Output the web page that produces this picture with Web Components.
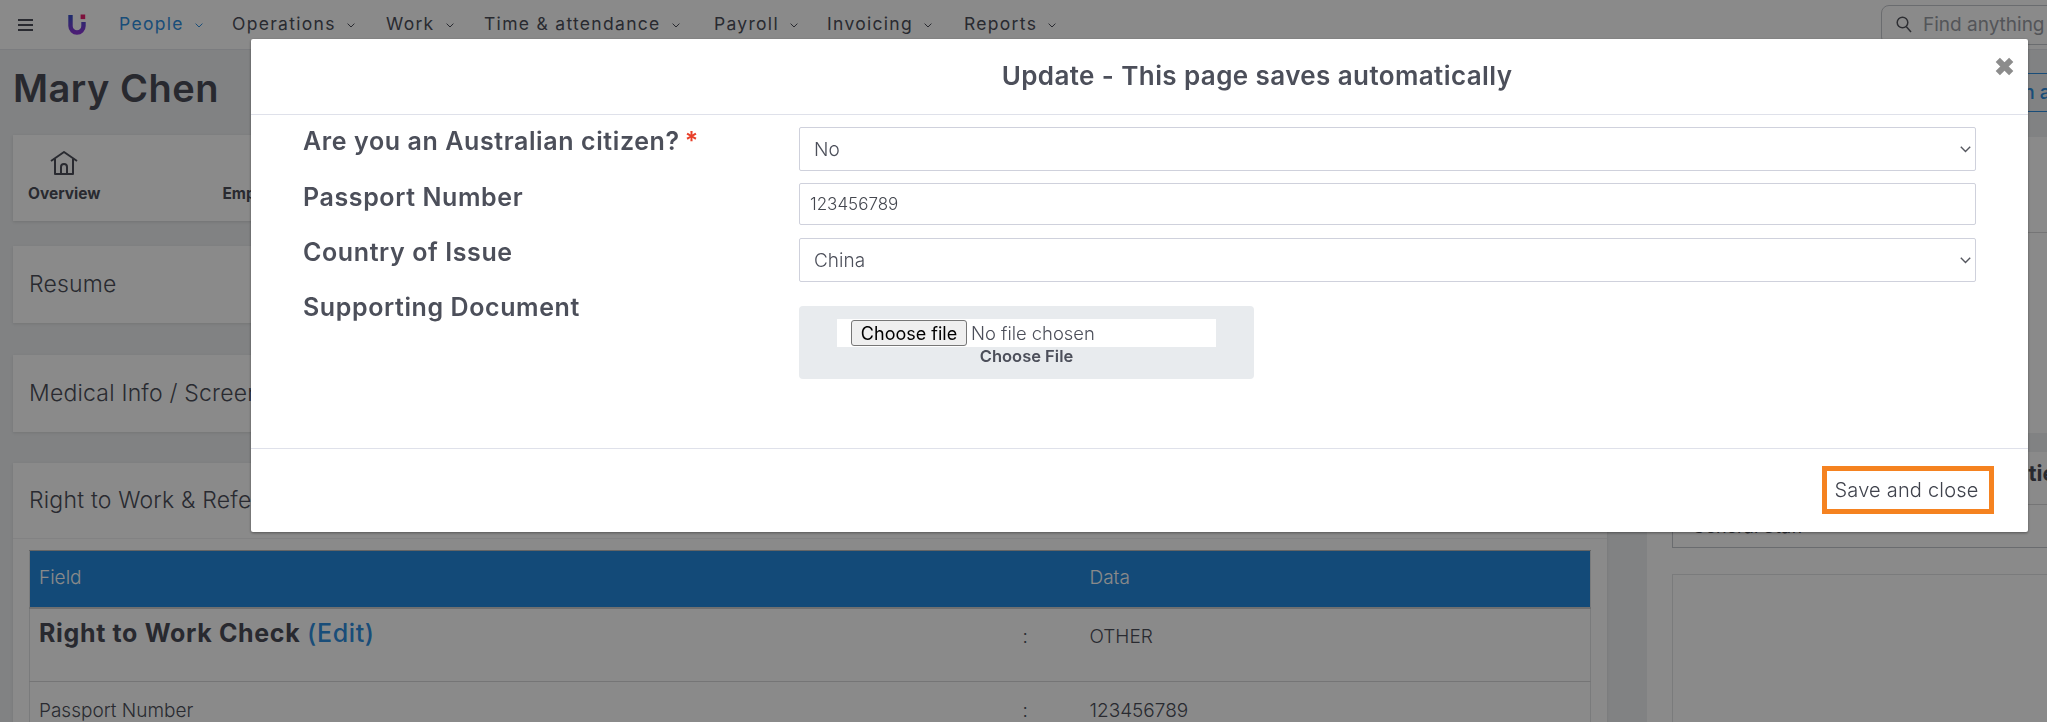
<!DOCTYPE html>
<html>
<head>
<meta charset="utf-8">
<title>Mary Chen</title>
<style>
  html, body { margin: 0; height: 100%; overflow: hidden; }
  body { background: #eef0f2; font-family: Inter, "Noto Sans", sans-serif; color: #4c4f5a; }
</style>
</head>
<body>
<top-nav>
  <nav-item active style="width:113px">People</nav-item>
  <nav-item style="width:154px">Operations</nav-item>
  <nav-item style="width:98px">Work</nav-item>
  <nav-item style="width:230px">Time &amp; attendance</nav-item>
  <nav-item style="width:113px">Payroll</nav-item>
  <nav-item style="width:137px">Invoicing</nav-item>
  <nav-item>Reports</nav-item>
</top-nav>
<page-layout>
  <h-title slot="title">Mary Chen</h-title>
  <tab-card slot="left"></tab-card>
  <section-card slot="left" heading="Resume" style="margin-top:25px;height:77px"></section-card>
  <section-card slot="left" heading="Medical Info / Screening" style="margin-top:32px;height:77px"></section-card>
  <section-card slot="left" heading="Right to Work &amp; References" divided style="margin-top:31px">
    <field-table></field-table>
  </section-card>
  <side-panel slot="right"></side-panel>
</page-layout>
<update-modal heading="Update - This page saves automatically">
  <form-row label="Are you an Australian citizen?" required style="height:56px"><select-field value="No"></select-field></form-row>
  <form-row label="Passport Number" style="height:55px"><text-field value="123456789"></text-field></form-row>
  <form-row label="Country of Issue" style="height:55px"><select-field value="China"></select-field></form-row>
  <form-row label="Supporting Document"><file-field></file-field></form-row>
</update-modal>

<script>
class TopNav extends HTMLElement {
    constructor() {
        super();
        this.attachShadow({ mode: 'open' });
        this.shadowRoot.innerHTML = `
      <style>
        :host { display: flex; align-items: center; height: 50px; box-sizing: border-box; background: #fff; border-bottom: 1px solid #e4e6ea; padding-left: 18px; }
        .burger { width: 15px; height: 12px; margin-right: 35px; border-top: 2px solid #4c4f5a; border-bottom: 2px solid #4c4f5a; position: relative; box-sizing: border-box; flex: none; }
        .burger::after { content: ""; position: absolute; left: 0; right: 0; top: 3px; height: 2px; background: #4c4f5a; }
        svg.logo { width: 18px; height: 21px; flex: none; margin-right: 33px; }
        .items { display: flex; flex: 1; }
        .search { width: 206px; margin-right: -40px; height: 40px; box-sizing: border-box; border: 1px solid #c4c7cd; border-radius: 8px; display: flex; align-items: center; padding-left: 14px; gap: 11px; font-size: 19px; color: #9a9da5; white-space: nowrap; flex: none; overflow: hidden; }
      </style>
      <div class="burger"></div>
      <svg class="logo" viewBox="0 0 18 21">
        <defs><linearGradient id="lg" x1="0" x2="0" y1="0" y2="1"><stop offset="0" stop-color="#3851c8"/><stop offset="1" stop-color="#8a38d8"/></linearGradient></defs>
        <path d="M2.5 1v11a6.5 6.5 0 0 0 13 0V8" fill="none" stroke="url(#lg)" stroke-width="4.4"/>
        <rect x="12.6" y="0.5" width="4.6" height="4.6" fill="#e82070"/>
      </svg>
      <div class="items"><slot></slot></div>
      <div class="search">
        <svg width="16" height="17" viewBox="0 0 16 17" fill="none" stroke="#55575f" stroke-width="1.5"><circle cx="6.5" cy="6.5" r="5.3"/><path d="M10.4 10.8L15 16"/></svg>
        <span>Find anything</span>
      </div>
    `;
    }
}

class NavItem extends HTMLElement {
    constructor() {
        super();
        this.attachShadow({ mode: 'open' });
        this.shadowRoot.innerHTML = `
      <style>
        :host { display: inline-flex; align-items: center; font-size: 17.5px; font-weight: 400; letter-spacing: 1.3px; color: #4c4f5a; white-space: nowrap; height: 30px; margin-top: -2px; flex: none; }
        :host([active]) { color: #2f8fe0; }
        svg { width: 8px; height: 5px; margin-left: 11px; margin-top: 3px; }
      </style>
      <slot></slot>
      <svg viewBox="0 0 8 5" fill="none" stroke="currentColor" stroke-width="1"><path d="M.6.6L4 4l3.4-3.4"/></svg>
    `;
    }
}

class PageLayout extends HTMLElement {
    constructor() {
        super();
        this.attachShadow({ mode: 'open' });
        this.shadowRoot.innerHTML = `
      <style>
        :host { display: grid; grid-template-columns: 1594px 1fr; column-gap: 40px; padding-left: 13px; }
        .left { display: block; }
      </style>
      <div class="left">
        <slot name="title"></slot>
        <slot name="left"></slot>
      </div>
      <slot name="right"></slot>
    `;
    }
}

class HTitle extends HTMLElement {
    constructor() {
        super();
        this.attachShadow({ mode: 'open' });
        this.shadowRoot.innerHTML = `
      <style>
        :host { display: flex; align-items: center; height: 86px; box-sizing: border-box; padding: 0 0 8px 0; font-size: 38px; font-weight: 600; color: #4a4d58; letter-spacing: 0.5px; margin-top: -1px; }
      </style>
      <slot></slot>
    `;
    }
}

class TabCard extends HTMLElement {
    constructor() {
        super();
        this.attachShadow({ mode: 'open' });
        this.shadowRoot.innerHTML = `
      <style>
        :host { display: flex; height: 86px; background: #fff; box-shadow: 0 1px 3px rgba(0,0,0,.12); font-size: 15.5px; font-weight: 700; color: #4c4f5a; }
        .tab { display: flex; flex-direction: column; align-items: center; padding: 16px 15px 0; white-space: nowrap; box-sizing: border-box; }
        svg { width: 28px; height: 24px; margin-bottom: 9px; }
        .emp { margin-left: 92px; padding-left: 15px; }
      </style>
      <div class="tab">
        <svg viewBox="0 0 28 24" fill="none" stroke="#4c4f5a" stroke-width="2" stroke-linejoin="round"><path d="M1 10L14 1l13 9"/><path d="M5 8v15h18V8"/><path d="M11 23v-7a3 3 0 0 1 6 0v7"/></svg>
        <span>Overview</span>
      </div>
      <div class="tab emp"><svg viewBox="0 0 28 24"></svg><span>Employment</span></div>
    `;
    }
}

class SectionCard extends HTMLElement {
    constructor() {
        super();
        this.attachShadow({ mode: 'open' });
        this.shadowRoot.innerHTML = `
      <style>
        :host { display: block; background: #fff; box-shadow: 0 1px 3px rgba(0,0,0,.1); }
        .head { display: flex; align-items: center; height: 100%; padding: 0 0 2px 16px; font-size: 23px; font-weight: 300; letter-spacing: 0.2px; color: #4c4f5a; white-space: nowrap; box-sizing: border-box; }
        :host([divided]) .head { height: 76px; border-bottom: 1px solid #f0f0f2; }
        .body { padding: 11px 16px 0; }
      </style>
      <div class="head"></div>
      <div class="body" hidden><slot></slot></div>
    `;
    }

    connectedCallback() {
        this.shadowRoot.querySelector('.head').textContent = this.getAttribute('heading');
        if (this.hasAttribute('divided')) this.shadowRoot.querySelector('.body').hidden = false;
    }
}

class FieldTable extends HTMLElement {
    constructor() {
        super();
        this.attachShadow({ mode: 'open' });
        this.shadowRoot.innerHTML = `
      <style>
        :host { display: block; }
        table { width: 100%; border-collapse: collapse; table-layout: fixed; font-size: 19px; font-weight: 300; color: #4c4f5a; border-left: 1px solid #e2e3e6; border-right: 1px solid #e2e3e6; }
        th { background: #2389de; color: #fff; text-align: left; font-weight: 300; height: 57px; padding: 0 10px 2px; border-top: 1px solid #bbb; border-bottom: 2px solid #d0d0d0; box-sizing: border-box; }
        td { padding: 0 10px; height: 74px; border-bottom: 1px solid #d8d8da; vertical-align: top; padding-top: 16px; box-sizing: border-box; }
        th:first-child, td:first-child { padding-left: 9px; }
        td.colon { padding-left: 7px; }
        td.big { font-size: 25px; font-weight: 700; letter-spacing: 0.65px; color: #4a4d58; padding-top: 9px; }
        .big a { color: #2f8fe0; font-weight: 500; }
        tr.low td { padding-top: 17px; }
      </style>
      <table>
        <colgroup><col style="width:986px"><col style="width:64px"><col></colgroup>
        <tr><th>Field</th><th></th><th>Data</th></tr>
        <tr><td class="big">Right to Work Check <a>(Edit)</a></td><td class="colon">:</td><td>OTHER</td></tr>
        <tr class="low"><td>Passport Number</td><td class="colon">:</td><td>123456789</td></tr>
      </table>
    `;
    }
}

class SidePanel extends HTMLElement {
    constructor() {
        super();
        this.attachShadow({ mode: 'open' });
        this.shadowRoot.innerHTML = `
      <style>
        :host { display: block; white-space: nowrap; }
        .top { height: 87px; position: relative; }
        .btn { position: absolute; left: 150px; top: 23px; width: 400px; height: 39px; box-sizing: border-box; border: 1px solid #2f8fe0; color: #2f8fe0; font-size: 19px; font-weight: 500; display: flex; align-items: center; padding-left: 126px; }
        .card { background: #fff; }
        .one { height: 296px; }
        .one .line { height: 95px; border-bottom: 1px solid #d8d8da; }
        .two { margin-top: 19px; height: 400px; }
        .two h3 { margin: 0; height: 53px; box-sizing: border-box; border-bottom: 1px solid #d8d8da; font-size: 22px; font-weight: 700; color: #4a4d58; padding: 8px 0 0 309px; }
        .sel { margin: 0 0 0 25px; height: 43px; box-sizing: border-box; border: 1px solid #c4c7cd; border-top: 0; font-size: 18px; font-weight: 400; color: #4c4f5a; padding: 11px 0 0 19px; }
        .box { margin: 26px 0 0 25px; height: 200px; border: 1px solid #e2e3e6; }
      </style>
      <div class="top"><div class="btn">Generate an audit</div></div>
      <div class="card one"><div class="line"></div></div>
      <div class="card two">
        <h3>Properties</h3>
        <div class="sel">General Staff</div>
        <div class="box"></div>
      </div>
    `;
    }
}

class UpdateModal extends HTMLElement {
    constructor() {
        super();
        this.attachShadow({ mode: 'open' });
        this.shadowRoot.innerHTML = `
      <style>
        :host { position: fixed; inset: 0; display: block; background: rgba(0,0,0,.46); padding: 39px 19px 0 251px; box-sizing: border-box; }
        .dialog { background: #fff; height: 493px; border-radius: 2px; box-shadow: 0 1px 3px rgba(0,0,0,.4); display: flex; flex-direction: column; position: relative; }
        header { height: 76px; flex: none; box-sizing: border-box; border-bottom: 1px solid #dfe1ea; display: flex; align-items: center; justify-content: center; font-size: 26px; font-weight: 600; color: #4c4f5a; padding: 0 0 3px 235px; letter-spacing: 0.4px; }
        .close { position: absolute; right: 13px; top: 17px; width: 21px; height: 21px; }
        .content { flex: 1; padding: 12px 52px 0 52px; }
        footer { height: 84px; flex: none; box-sizing: border-box; border-top: 1px solid #dfe1ea; display: flex; justify-content: flex-end; align-items: center; padding: 0 34px 0 0; }
        button { font: 300 20px Inter, sans-serif; color: #3f424c; background: #fff; border: 5px solid #f58220; width: 172px; height: 48px; padding: 0 3px 0 0; margin-top: -1px; letter-spacing: 0.2px; white-space: nowrap; }
      </style>
      <div class="dialog">
        <header><span class="title"></span></header>
        <svg class="close" viewBox="0 0 21 21"><path d="M3.8 3.8l13.4 13.4M17.2 3.8L3.8 17.2" stroke="#8c8c8c" stroke-width="6"/></svg>
        <div class="content"><slot></slot></div>
        <footer><button>Save and close</button></footer>
      </div>
    `;
    }

    connectedCallback() {
        this.shadowRoot.querySelector('.title').textContent = this.getAttribute('heading');
    }
}

class FormRow extends HTMLElement {
    constructor() {
        super();
        this.attachShadow({ mode: 'open' });
        this.shadowRoot.innerHTML = `
      <style>
        :host { display: grid; grid-template-columns: 496px 1fr; }
        label { font-size: 25px; font-weight: 600; letter-spacing: 0.6px; color: #4c4f5a; line-height: 28px; white-space: nowrap; }
        .req { color: #e8402a; margin-left: 5px; }
      </style>
      <label><span class="txt"></span><span class="req" hidden>*</span></label>
      <div><slot></slot></div>
    `;
    }

    connectedCallback() {
        this.shadowRoot.querySelector('.txt').textContent = this.getAttribute('label');
        if (this.hasAttribute('required')) this.shadowRoot.querySelector('.req').hidden = false;
    }
}

class SelectField extends HTMLElement {
    constructor() {
        super();
        this.attachShadow({ mode: 'open' });
        this.shadowRoot.innerHTML = `
      <style>
        :host { display: block; position: relative; }
        select { appearance: none; display: block; width: 100%; height: 44px; box-sizing: border-box; background: #fff; border: 1px solid #cfd1dc; border-radius: 2px; font: 300 19px Inter, sans-serif; color: #4c4f5a; padding: 0 14px; outline: none; }
        svg { position: absolute; right: 5px; top: 19px; width: 11px; height: 7px; pointer-events: none; }
      </style>
      <select><option></option></select>
      <svg viewBox="0 0 11 7" fill="none" stroke="#55575f" stroke-width="1.4"><path d="M.8.8l4.7 4.7L10.2.8"/></svg>
    `;
    }

    connectedCallback() {
        this.shadowRoot.querySelector('option').textContent = this.getAttribute('value');
    }
}

class TextField extends HTMLElement {
    constructor() {
        super();
        this.attachShadow({ mode: 'open' });
        this.shadowRoot.innerHTML = `
      <style>
        :host { display: block; }
        input { display: block; width: 100%; height: 42px; box-sizing: border-box; background: #fff; border: 1px solid #cfd1dc; border-radius: 2px; font: 300 17px Inter, sans-serif; color: #44474f; padding: 0 10px; outline: none; }
      </style>
      <input type="text">
    `;
    }

    connectedCallback() {
        this.shadowRoot.querySelector('input').value = this.getAttribute('value');
    }
}

class FileField extends HTMLElement {
    constructor() {
        super();
        this.attachShadow({ mode: 'open' });
        this.shadowRoot.innerHTML = `
      <style>
        :host { display: block; width: 455px; height: 73px; margin-top: 13px; box-sizing: border-box; background: #e8ebee; border-radius: 4px; padding: 13px 38px 0; }
        .white { background: #fff; height: 28px; padding: 1px 0 0 14px; box-sizing: border-box; display: flex; align-items: flex-start; gap: 4px; font: 300 18.4px/26px Inter, sans-serif; color: #4c4f5a; }
        button { width: 116px; height: 26px; box-sizing: border-box; padding: 0; background: #efefef; border: 1px solid #767676; border-radius: 3px; font: 400 18px Inter, sans-serif; color: #000; }
        .cap { text-align: center; font-size: 16.5px; font-weight: 600; color: #4c4f5a; line-height: 18px; }
      </style>
      <div class="white"><button>Choose file</button><span>No file chosen</span></div>
      <div class="cap">Choose File</div>
    `;
    }
}

customElements.define('top-nav', TopNav);
customElements.define('nav-item', NavItem);
customElements.define('page-layout', PageLayout);
customElements.define('h-title', HTitle);
customElements.define('tab-card', TabCard);
customElements.define('section-card', SectionCard);
customElements.define('field-table', FieldTable);
customElements.define('side-panel', SidePanel);
customElements.define('update-modal', UpdateModal);
customElements.define('form-row', FormRow);
customElements.define('select-field', SelectField);
customElements.define('text-field', TextField);
customElements.define('file-field', FileField);
</script>
</body>
</html>
